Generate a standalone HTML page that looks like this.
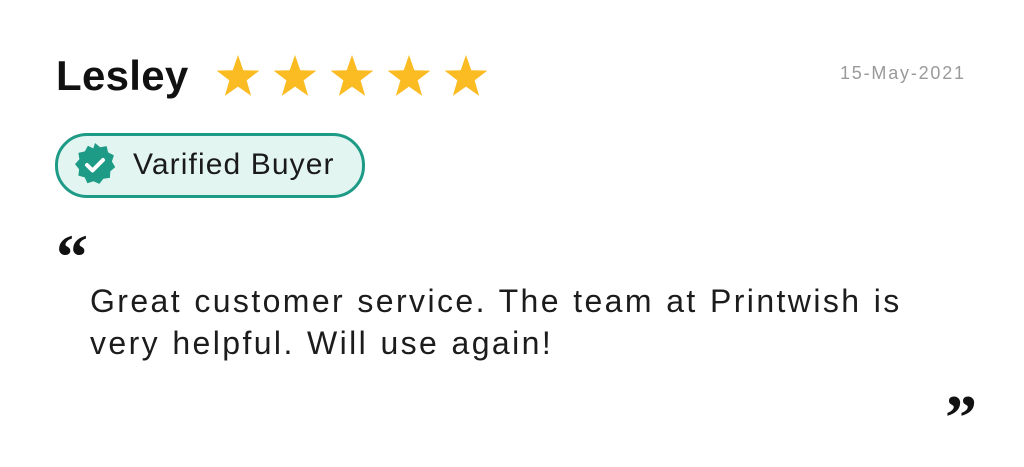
<!DOCTYPE html>
<html><head><meta charset="utf-8"><style>
html,body{margin:0;padding:0;background:#fff;width:1024px;height:467px;overflow:hidden;font-family:"Liberation Sans",sans-serif;}
.abs{position:absolute;}
.name{left:56px;top:52px;font-size:42px;font-weight:bold;color:#111;letter-spacing:0.3px;}
.date{left:840px;top:63px;font-size:18px;color:#9a9a9a;letter-spacing:1.8px;}
.badge{left:55px;top:133px;width:304px;height:59px;border:3px solid #1e9b86;border-radius:32px;background:#e2f5f1;}
.btxt{left:133px;top:148px;font-size:30px;color:#1a1a1a;letter-spacing:1.1px;}
.body{left:90px;top:280px;font-size:32px;line-height:42px;color:#1c1c1c;letter-spacing:2.4px;word-spacing:1px;white-space:nowrap;}
.q{font-family:"Liberation Serif",serif;font-weight:bold;font-size:64px;color:#111;line-height:1;}
</style></head><body>
<div class="abs name">Lesley</div>
<svg class="abs" style="left:212px;top:52px" width="280" height="46" viewBox="0 0 280 46">
<g fill="#fbbb22">
<polygon id="s" points="26,3 31.3,18.3 47.4,18.6 34.6,28.4 39.2,43.9 26,34.6 12.8,43.9 17.4,28.4 4.6,18.6 20.7,18.3"/>
<use href="#s" x="57"/><use href="#s" x="114"/><use href="#s" x="171"/><use href="#s" x="228"/>
</g></svg>
<div class="abs date">15-May-2021</div>
<div class="abs badge"></div>
<svg class="abs" style="left:72px;top:142px" width="46" height="46" viewBox="-23 -23 46 46">
<polygon fill="#1e9b86" points="0,-22 5.2,-17.8 11.6,-18.9 13.1,-12.6 18.9,-9.6 16.9,-3.5 20.2,2.1 15.3,6.4 14.9,12.9 8.4,13.8 4.3,18.9 -1.5,16.2 -7.6,18.3 -10.3,12.4 -16.6,10.6 -15.9,4.2 -20.0,-0.9 -15.6,-5.7 -16.6,-12.1 -10.2,-13.6 -7.1,-19.2 -1.7,-16.6"/>
<path d="M-8,0 L-2.5,5.5 L8,-5" fill="none" stroke="#fff" stroke-width="4" stroke-linecap="round" stroke-linejoin="round"/>
</svg>
<div class="abs btxt">Varified Buyer</div>
<div class="abs q" style="left:56px;top:225px">“</div>
<div class="abs body">Great customer service. The team at Printwish is<br>very helpful. Will use again!</div>
<div class="abs q" style="left:945px;top:386px">”</div>
</body></html>
